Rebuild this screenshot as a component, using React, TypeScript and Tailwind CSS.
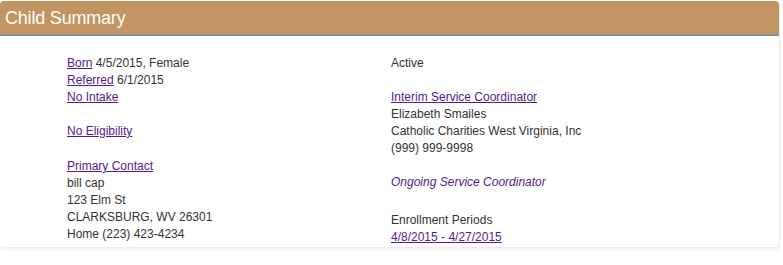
const link = "text-[#551a8b] underline";

const App = () => {
  return (
    <div className="bg-white w-[783px] h-[265px] pt-px font-['Liberation_Sans',Arial,sans-serif]">
      <div className="w-[780px] rounded-[4px] border-r border-b border-[#ececec] shadow-[0_2px_3px_rgba(0,0,0,0.05)]">
        {/* Header */}
        <div className="h-[35px] bg-[#c29462] rounded-t-[4px] border-b border-[#4a90d0] flex items-center pl-[5px]">
          <h1 className="text-white text-[18px] leading-none tracking-[-0.2px]">Child Summary</h1>
        </div>

        {/* Body */}
        <div className="grid grid-cols-[324px_1fr] pl-[67px] pt-[19px] pb-[1px] text-[12px] leading-[17px] text-[#333]">
          <div>
            <div>
              <a href="#" className={link}>Born</a> 4/5/2015, Female
            </div>
            <div>
              <a href="#" className={link}>Referred</a> 6/1/2015
            </div>
            <div>
              <a href="#" className={link}>No Intake</a>
            </div>
            <div className="mt-[17px]">
              <a href="#" className={link}>No Eligibility</a>
            </div>
            <div className="mt-[18px]">
              <a href="#" className={link}>Primary Contact</a>
            </div>
            <div>bill cap</div>
            <div>123 Elm St</div>
            <div>CLARKSBURG, WV 26301</div>
            <div>Home (223) 423-4234</div>
          </div>

          <div>
            <div>Active</div>
            <div className="mt-[17px]">
              <a href="#" className={link}>Interim Service Coordinator</a>
            </div>
            <div>Elizabeth Smailes</div>
            <div>Catholic Charities West Virginia, Inc</div>
            <div>(999) 999-9998</div>
            <div className="mt-[17px] italic text-[#551a8b]">Ongoing Service Coordinator</div>
            <div className="mt-[21px]">Enrollment Periods</div>
            <div>
              <a href="#" className={link}>4/8/2015 - 4/27/2015</a>
            </div>
          </div>
        </div>
      </div>
    </div>
  );
};

export default App;
